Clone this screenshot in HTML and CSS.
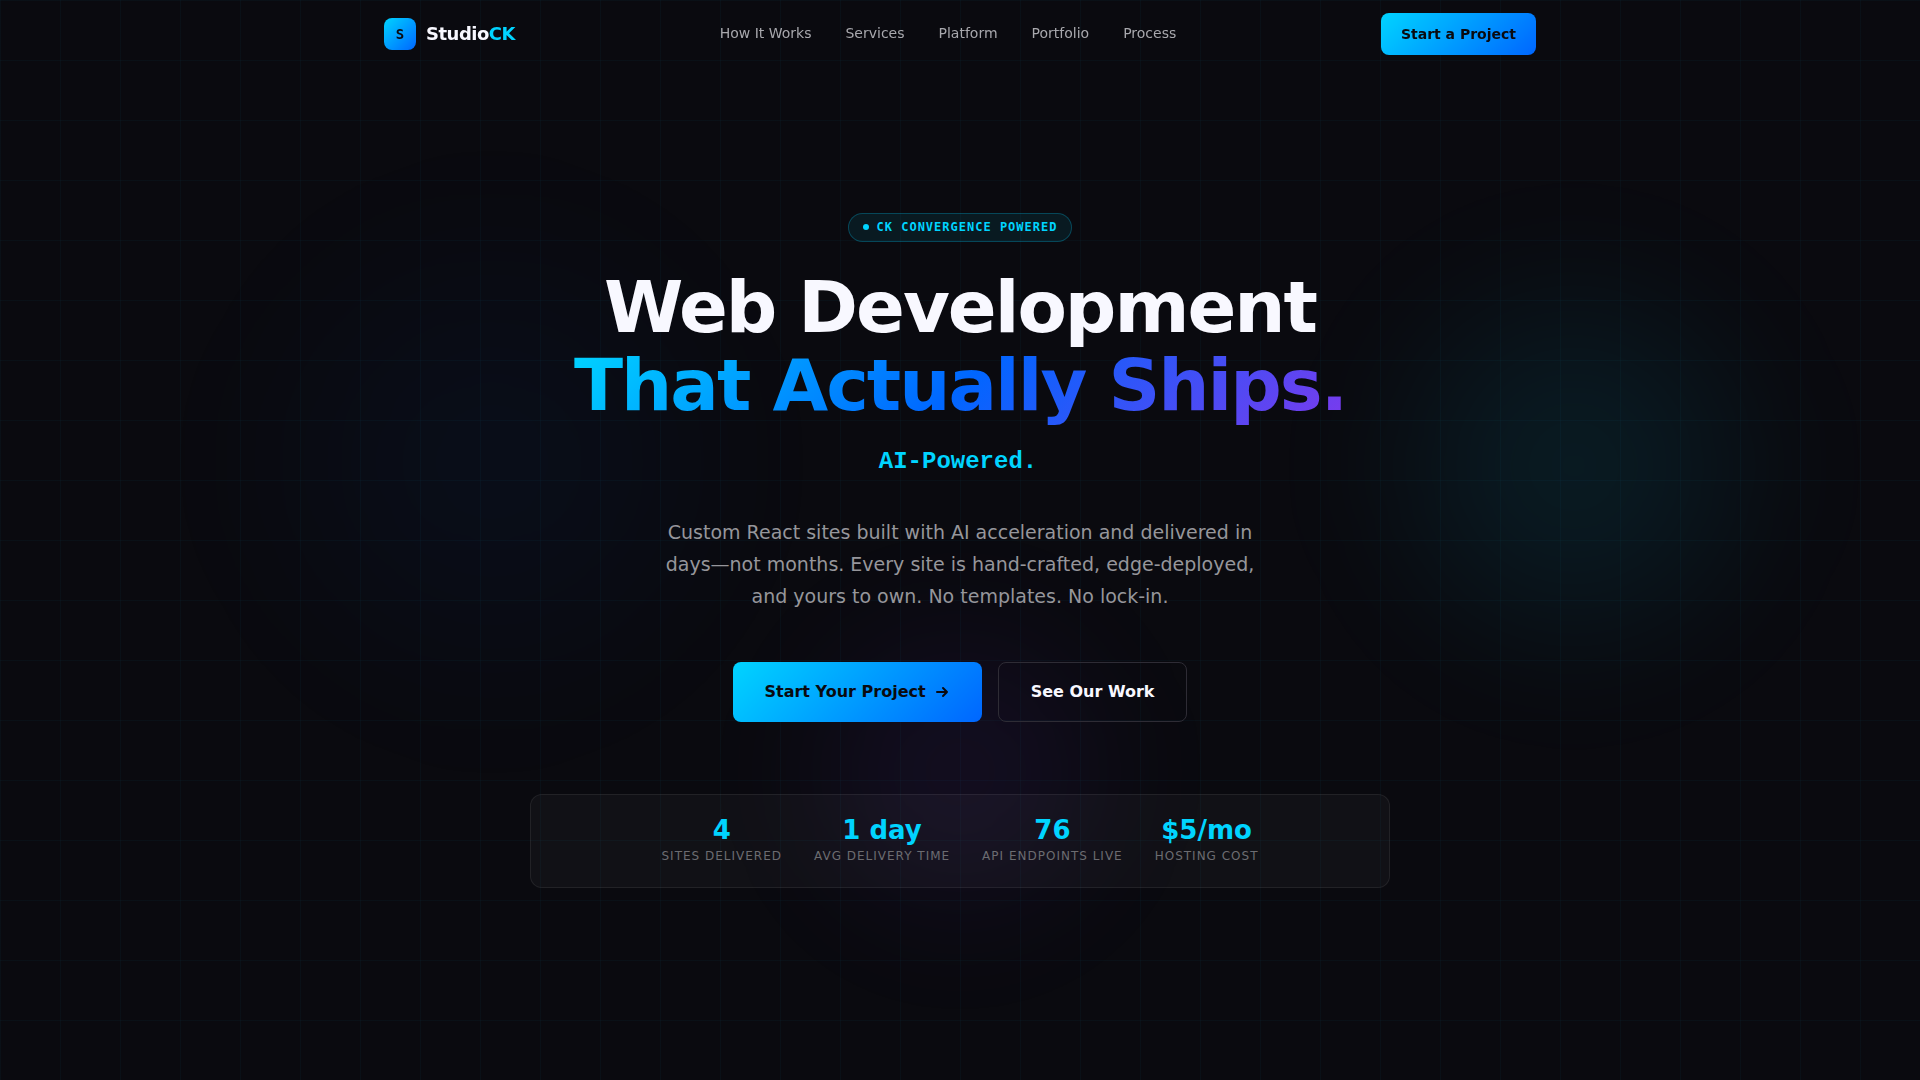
FILE: index.html
```html
<!DOCTYPE html>
<html lang="en">
<head>
  <meta charset="UTF-8">
  <meta name="viewport" content="width=device-width, initial-scale=1.0">
  <title>StudioCK</title>
  <link rel="stylesheet" href="styles.css">
</head>
<body>

  <header class="header">
    <nav class="nav">
      <a href="#" class="logo">
        <span class="logo-mark">S</span>
        <span class="logo-text">Studio<span class="accent">CK</span></span>
      </a>
      <div class="nav-links">
        <a href="#how-it-works">How It Works</a>
        <a href="#services">Services</a>
        <a href="#platform">Platform</a>
        <a href="#portfolio">Portfolio</a>
        <a href="#process">Process</a>
      </div>
      <button type="button" class="btn btn-primary btn-small">Start a Project</button>
    </nav>
  </header>

  <main class="hero">
    <div class="grid-lines"></div>
    <div class="orb orb-cyan"></div>
    <div class="orb orb-blue"></div>
    <div class="orb orb-violet"></div>

    <div class="hero-content">
      <div class="badge"><span class="dot"></span>CK CONVERGENCE POWERED</div>

      <h1 class="title">
        <span>Web Development</span>
        <span class="title-gradient">That Actually Ships.</span>
      </h1>
      <p class="tagline">AI-Powered.</p>

      <p class="lead">Custom React sites built with AI acceleration and delivered in days—not months. Every site is hand-crafted, edge-deployed, and yours to own. No templates. No lock-in.</p>

      <div class="actions">
        <button type="button" class="btn btn-primary btn-large">
          Start Your Project
          <svg class="arrow" viewBox="0 0 16 16" aria-hidden="true">
            <path d="M3 8h10M9 4l4 4-4 4" />
          </svg>
        </button>
        <button type="button" class="btn btn-outline btn-large">See Our Work</button>
      </div>

      <div class="stats">
        <div class="stat">
          <span class="stat-value">4</span>
          <span class="stat-label">Sites Delivered</span>
        </div>
        <div class="stat">
          <span class="stat-value">1 day</span>
          <span class="stat-label">Avg Delivery Time</span>
        </div>
        <div class="stat">
          <span class="stat-value">76</span>
          <span class="stat-label">API Endpoints Live</span>
        </div>
        <div class="stat">
          <span class="stat-value">$5/mo</span>
          <span class="stat-label">Hosting Cost</span>
        </div>
      </div>
    </div>
  </main>

</body>
</html>
```
FILE: styles.css
```css
* {
  box-sizing: border-box;
  margin: 0;
  padding: 0;
}

body {
  font-family: "DejaVu Sans", sans-serif;
  background: #0a0a0f;
  color: #f8f8ff;
}

a {
  color: inherit;
  text-decoration: none;
}

.accent {
  color: #00d4ff;
}

/* Header */
.header {
  position: fixed;
  top: 0;
  left: 0;
  right: 0;
  z-index: 10;
}

.nav {
  display: flex;
  align-items: center;
  justify-content: space-between;
  max-width: 1200px;
  margin: 0 auto;
  padding: 13px 24px;
}

.logo {
  display: flex;
  align-items: center;
  gap: 10px;
  font-weight: 700;
}

.logo-mark {
  display: flex;
  align-items: center;
  justify-content: center;
  width: 32px;
  height: 32px;
  border-radius: 8px;
  background: linear-gradient(135deg, #00d4ff, #0066ff);
  color: #0a0a0f;
  font-family: "DejaVu Sans Mono", monospace;
  font-size: 14px;
}

.logo-text {
  font-size: 18px;
  line-height: 24px;
  letter-spacing: -0.5px;
}

.nav-links {
  display: flex;
  gap: 34px;
  padding-bottom: 2px;
  font-size: 14px;
  color: #a8a8ad;
}

/* Buttons */
.btn {
  display: flex;
  align-items: center;
  justify-content: center;
  gap: 8px;
  border: none;
  border-radius: 8px;
  font-family: inherit;
  font-weight: 600;
  cursor: pointer;
}

.btn-primary {
  background: linear-gradient(135deg, #00d4ff, #0066ff);
  color: #0a0a0f;
}

.btn-outline {
  background: transparent;
  border: 1px solid #2e2c35;
  color: #f8f8ff;
}

.btn-small {
  height: 42px;
  padding: 0 20px;
  font-size: 14px;
}

.btn-large {
  height: 60px;
  padding: 0 32px;
  font-size: 16px;
}

.arrow {
  width: 16px;
  height: 16px;
  fill: none;
  stroke: currentColor;
  stroke-width: 2;
  stroke-linecap: round;
  stroke-linejoin: round;
}

/* Hero */
.hero {
  position: relative;
  display: flex;
  align-items: center;
  justify-content: center;
  min-height: 100vh;
  padding: 120px 24px 100px;
  overflow: hidden;
}

.grid-lines {
  position: absolute;
  inset: 0;
  background-image:
    linear-gradient(rgba(0, 212, 255, 0.03) 1px, transparent 1px),
    linear-gradient(90deg, rgba(0, 212, 255, 0.03) 1px, transparent 1px);
  background-size: 60px 60px;
}

.orb {
  position: absolute;
  border-radius: 50%;
  filter: blur(48px);
}

.orb-cyan {
  right: 5%;
  top: 20%;
  width: 500px;
  height: 500px;
  background: radial-gradient(circle, rgba(0, 212, 255, 0.1), transparent 70%);
}

.orb-blue {
  left: 10%;
  top: 15%;
  width: 600px;
  height: 600px;
  background: radial-gradient(circle, rgba(0, 102, 255, 0.05), transparent 70%);
}

.orb-violet {
  left: calc(50% - 200px);
  bottom: 10%;
  width: 400px;
  height: 400px;
  background: radial-gradient(circle, rgba(124, 58, 237, 0.1), transparent 70%);
}

.hero-content {
  position: relative;
  display: flex;
  flex-direction: column;
  align-items: center;
  width: 100%;
  max-width: 860px;
  text-align: center;
}

.badge {
  display: flex;
  align-items: center;
  gap: 8px;
  height: 29px;
  padding: 0 14px;
  margin-bottom: 26px;
  border: 1px solid rgba(0, 212, 255, 0.25);
  border-radius: 100px;
  background: rgba(0, 212, 255, 0.08);
  color: #00d4ff;
  font-family: "DejaVu Sans Mono", monospace;
  font-size: 12px;
  font-weight: 600;
  letter-spacing: 1px;
}

.dot {
  width: 6px;
  height: 6px;
  border-radius: 50%;
  background: #00d4ff;
}

.title {
  font-size: 72px;
  font-weight: 800;
  line-height: 78px;
  letter-spacing: -2px;
}

.title span {
  display: block;
}

.title-gradient {
  padding-bottom: 4px;
  background: linear-gradient(135deg, #00d4ff, #0066ff 50%, #7c3aed);
  -webkit-background-clip: text;
  background-clip: text;
  color: transparent;
}

.tagline {
  margin: 18px 0 38px;
  padding-right: 4px;
  color: #00d4ff;
  font-family: "Liberation Mono", monospace;
  font-size: 24px;
  font-weight: 700;
  line-height: 32px;
}

.lead {
  max-width: 620px;
  margin-bottom: 50px;
  color: #96969b;
  font-size: 19px;
  line-height: 32px;
}

.actions {
  display: flex;
  gap: 16px;
  margin-bottom: 72px;
}

/* Stats */
.stats {
  display: flex;
  justify-content: center;
  gap: 32px;
  width: 100%;
  padding: 20px 24px 22px;
  border: 1px solid rgba(255, 255, 255, 0.07);
  border-radius: 12px;
  background: rgba(255, 255, 255, 0.03);
}

.stat {
  display: flex;
  flex-direction: column;
  gap: 2px;
}

.stat-value {
  color: #00d4ff;
  font-size: 26px;
  font-weight: 700;
  line-height: 30px;
}

.stat-label {
  color: #6c6c71;
  font-size: 12px;
  line-height: 18px;
  letter-spacing: 1px;
  text-transform: uppercase;
}
```
